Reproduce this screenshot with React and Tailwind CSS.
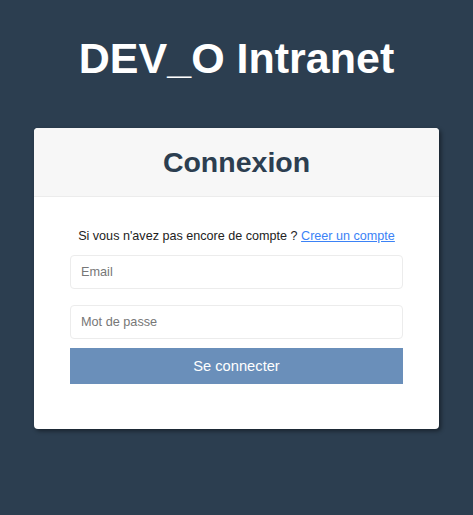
import React, { useState } from 'react';

const App = () => {
  const [email, setEmail] = useState('');
  const [password, setPassword] = useState('');

  return (
    <div
      className="min-h-[515px] bg-[#2c3e50] px-[34px] pt-[34px] pb-10"
      style={{ fontFamily: '"Liberation Sans", Arial, sans-serif' }}
    >
      <h1 className="text-center text-[43px] font-bold leading-[48px] text-white">DEV_O Intranet</h1>

      {/* Login card */}
      <div className="mt-[46px] rounded-[4px] bg-white shadow-[2px_2px_4px_rgba(0,0,0,0.45)]">
        <div className="flex h-[69px] items-center justify-center rounded-t-[4px] border-b border-[#ececec] bg-[#f7f7f7]">
          <h2 className="text-[28.5px] font-bold text-[#2c3e50]">Connexion</h2>
        </div>

        <form className="px-[36px] pt-[30px] pb-[45px]" onSubmit={(e) => e.preventDefault()}>
          <p className="whitespace-nowrap text-center text-[12.6px] leading-[18px] text-[#222]">
            Si vous n'avez pas encore de compte ?{' '}
            <a href="#" className="text-[#3b82f6] underline">Creer un compte</a>
          </p>

          <input
            type="email"
            value={email}
            onChange={(e) => setEmail(e.target.value)}
            placeholder="Email"
            className="mt-[10px] block h-[34px] w-full rounded-[4px] border border-[#ececec] px-[10px] text-[12.7px] text-[#333] outline-none placeholder:text-[#777]"
          />
          <input
            type="password"
            value={password}
            onChange={(e) => setPassword(e.target.value)}
            placeholder="Mot de passe"
            className="mt-[16px] block h-[34px] w-full rounded-[4px] border border-[#ececec] px-[10px] text-[12.7px] text-[#333] outline-none placeholder:text-[#777]"
          />
          <button
            type="submit"
            className="mt-[9px] block h-[36px] w-full bg-[#6a8fba] text-[14.7px] text-white"
          >
            Se connecter
          </button>
        </form>
      </div>
    </div>
  );
};

export default App;
